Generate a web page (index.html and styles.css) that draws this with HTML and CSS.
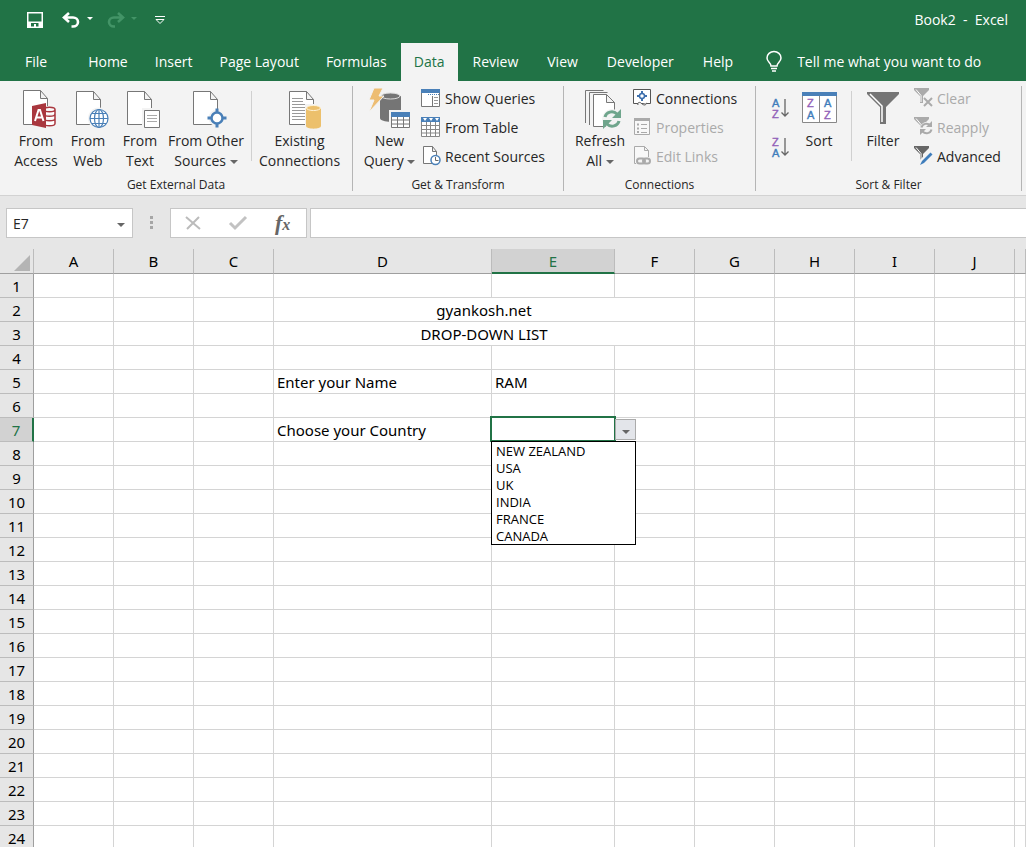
FILE: index.html
```
<!DOCTYPE html>
<html lang="en">
<head>
  <meta charset="UTF-8" />
  <meta name="viewport" content="width=device-width, initial-scale=1.0" />
  <title>Book2 - Excel</title>
  <link rel="stylesheet" href="styles.css">
</head>
<body>
  <header class="titlebar">
    <div class="quick">
      <button class="q-save" aria-label="Save">
        <svg width="16" height="16" viewBox="0 0 16 16"><path d="M0 0h16v16H0z M1.500 1.500v8h13v-8z M4 11v3.500h3V12h2v2.500h2.500V11z" fill="#fff" fill-rule="evenodd"/></svg>
      </button>
      <button class="q-undo" aria-label="Undo">
        <svg width="28" height="16" viewBox="0 0 28 16"><path d="M7 1L2 5.500L7 10 M2.500 5.500H11a5 4.500 0 0 1 0 9H9.500" fill="none" stroke="#fff" stroke-width="2.600"/><path d="M25 5h6l-3 3z" fill="#fff"/></svg>
      </button>
      <button class="q-redo" aria-label="Redo" disabled>
        <svg width="28" height="16" viewBox="0 0 28 16"><path d="M12 1l5 4.500L12 10 M16.500 5.500H8a5 4.500 0 0 0 0 9h1" fill="none" stroke="#439467" stroke-width="2.600"/><path d="M25 5h6l-3 3z" fill="#439467"/></svg>
      </button>
      <button class="q-more" aria-label="Customize Quick Access Toolbar">
        <svg width="10" height="8" viewBox="0 0 10 8"><path d="M0 .5h10 M1 3.500h8L5 7.500z" fill="none" stroke="#fff"/></svg>
      </button>
    </div>
    <div class="doc-name">Book2&nbsp; -&nbsp; Excel</div>
  </header>

  <nav class="tabs">
    <a href="#" class="file">File</a>
    <a href="#">Home</a>
    <a href="#">Insert</a>
    <a href="#">Page Layout</a>
    <a href="#">Formulas</a>
    <a href="#" class="active">Data</a>
    <a href="#">Review</a>
    <a href="#">View</a>
    <a href="#">Developer</a>
    <a href="#">Help</a>
    <button class="tell-me">
      <svg width="16" height="21" viewBox="0 0 16 21"><path d="M5 15c0-3-4-4-4-8a7 6.500 0 0 1 14 0c0 4-4 5-4 8z M5 17.500h6 M6 20h4" fill="none" stroke="#fff" stroke-width="1.500"/></svg>
      Tell me what you want to do
    </button>
  </nav>

  <div class="ribbon">
    <section class="group g-external">
      <div class="tools">
        <button class="big">
          <svg width="40" height="40" viewBox="0 0 40 40">
            <path d="M7.500.5h17l7 8v26h-24z M24.500.5v8h7" fill="#fff" stroke="#777"/>
            <path d="M27 16h14v22H27z" fill="#f3f3f3"/>
            <path d="M28 19.500c0-3 11-3 11 0v14c0 3-11 3-11 0z M28 19.500c0 3 11 3 11 0 M28 24c0 3 11 3 11 0 M28 28.500c0 3 11 3 11 0" fill="#fff" stroke="#a9373e" stroke-width="1.500"/>
            <path d="M16 16l14-3v25l-14-3z" fill="#a9373e"/>
            <path d="M19 31l3.500-11h1.500l3.500 11 M20.500 27.500h5.500" fill="none" stroke="#fff" stroke-width="2"/>
          </svg>
          <span>From<br>Access</span>
        </button>
        <button class="big">
          <svg width="40" height="40" viewBox="0 0 40 40">
            <path d="M8.500 1.500h17l7 8v25h-24z M25.500 1.500v8h7" fill="#fff" stroke="#777"/>
            <circle cx="31" cy="28.500" r="11" fill="#f3f3f3"/>
            <g fill="none" stroke="#4a80b8" stroke-width="1.200"><circle cx="31" cy="28.500" r="9" fill="#fff"/><ellipse cx="31" cy="28.500" rx="4.500" ry="9"/><path d="M31 19.500v18 M22 28.500h18 M24 23.500h14 M24 33.500h14"/></g>
          </svg>
          <span>From<br>Web</span>
        </button>
        <button class="big">
          <svg width="40" height="40" viewBox="0 0 40 40">
            <path d="M7.500 1.500h17l7 8v25h-24z M24.500 1.500v8h7" fill="#fff" stroke="#777"/>
            <path d="M22 18h19v21H22z" fill="#f3f3f3"/>
            <path d="M24.500 20.500h15v17h-15z" fill="#fff" stroke="#777"/>
            <path d="M27 25.500h10 M27 28.500h10 M27 31.500h10" stroke="#aaa"/>
          </svg>
          <span>From<br>Text</span>
        </button>
        <button class="big wide">
          <svg width="40" height="40" viewBox="0 0 40 40">
            <path d="M7.500 1.500h17l7 8v25h-24z M24.500 1.500v8h7" fill="#fff" stroke="#777"/>
            <circle cx="31" cy="28" r="8.500" fill="#f3f3f3"/>
            <circle cx="31" cy="28" r="5.500" fill="#fff" stroke="#4a80b8" stroke-width="2.500"/>
            <path d="M31 18.500v4 M31 33.500v4 M21.500 28h4 M36.500 28h4" stroke="#4a80b8" stroke-width="3"/>
          </svg>
          <span>From Other<br>Sources <i class="caret"></i></span>
        </button>
        <div class="rule"></div>
        <button class="big existing">
          <svg width="40" height="40" viewBox="0 0 40 40">
            <path d="M9.500 1.500h17l7 8v25h-24z M26.500 1.500v8h7" fill="#fff" stroke="#777"/>
            <path d="M12 8.500h11 M12 11.500h11 M12 14.500h18 M12 17.500h18 M12 20.500h18 M12 23.500h18 M12 26.500h18 M12 29.500h18" stroke="#999"/>
            <path d="M25 14h17v25H25z" fill="#f3f3f3"/>
            <path d="M26 18v18c0 3.500 15 3.500 15 0V18z" fill="#ecc06c"/>
            <ellipse cx="33.500" cy="18" rx="7" ry="2.500" fill="#ecc06c" stroke="#fff3d8"/>
          </svg>
          <span>Existing<br>Connections</span>
        </button>
      </div>
      <h2>Get External Data</h2>
    </section>

    <section class="group g-transform">
      <div class="tools">
        <button class="big query">
          <svg width="40" height="40" viewBox="0 0 40 40">
            <path d="M10 6v22c0 5 21 5 21 0V6z" fill="#757575"/>
            <ellipse cx="20.500" cy="6" rx="9.500" ry="3" fill="#757575" stroke="#ddd"/>
            <path d="M4-2h9L9 6h5L-1 22l5-12h-5z" fill="#edbd72" stroke="#f3f3f3"/>
            <path d="M19 20h22v20H19z" fill="#f3f3f3"/>
            <path d="M21.500 22.500h18v15h-18z M21.500 30h18 M21.500 34h18 M27.500 26v12 M33.500 26v12" fill="#fff" stroke="#777"/>
            <path d="M21 22h19v5H21z" fill="#4a80b8"/>
          </svg>
          <span>New<br>Query <i class="caret"></i></span>
        </button>
        <div class="small-list">
          <button>
            <svg width="20" height="20" viewBox="0 0 20 20"><path d="M.5 1.500h18v17H.5z M11.500 8v10" fill="#fff" stroke="#777"/><path d="M0 1h19v4H0z" fill="#4a80b8"/><path d="M7 6.500h11" stroke="#4a80b8" stroke-dasharray="1 1"/><path d="M13 9.500h4 M13 12.500h4 M13 15.500h4" stroke="#999"/></svg>
            Show Queries
          </button>
          <button>
            <svg width="20" height="20" viewBox="0 0 20 20"><path d="M.5 1.500h18v18H.5z M.5 8.500h18 M.5 12.500h18 M.5 16h18 M5.500 5v14 M9.500 5v14 M14.500 5v14" fill="#fff" stroke="#888"/><path d="M0 0h19v5H0z" fill="#4a80b8"/><path d="M2 1h4l-2 3z M8 1h4l-2 3z M14 1h4l-2 3z" fill="#fff"/></svg>
            From Table
          </button>
          <button>
            <svg width="20" height="20" viewBox="0 0 20 20"><path d="M2.500.5h9l4 5v12h-13z M11.500.5v5h4" fill="#fff" stroke="#777"/><circle cx="14.500" cy="14" r="4.500" fill="#fff" stroke="#4a80b8" stroke-width="1.500"/><path d="M14.500 11v3.500h3" fill="none" stroke="#666"/></svg>
            Recent Sources
          </button>
        </div>
      </div>
      <h2>Get &amp; Transform</h2>
    </section>

    <section class="group g-connections">
      <div class="tools">
        <button class="big refresh">
          <svg width="40" height="40" viewBox="0 0 40 40">
            <path d="M5.500 33V.5h18 M9.500 35V2.500h18" fill="none" stroke="#777"/>
            <path d="M13.500 4.500h13l8 8v24h-21z M26.500 4.500v8h8" fill="#fff" stroke="#777"/>
            <circle cx="32" cy="29" r="10" fill="#f3f3f3"/>
            <path d="M25 27c1-5 8-7 12-3 M39 31c-1 5-8 7-12 3" fill="none" stroke="#6fa58c" stroke-width="3"/>
            <path d="M41 19v9h-9z M23 39v-9h9z" fill="#6fa58c"/>
          </svg>
          <span>Refresh<br>All <i class="caret"></i></span>
        </button>
        <div class="small-list">
          <button>
            <svg width="20" height="20" viewBox="0 0 20 20"><path d="M.5 1.500h17v14H.5z" fill="#fff" stroke="#555"/><circle cx="9" cy="8" r="2.500" fill="#fff" stroke="#3f70ad" stroke-width="1.500"/><path d="M9 3v2.500 M9 10.500V13 M4 8h2.500 M11.500 8H14" stroke="#3f70ad" stroke-width="2"/><path d="M5 17c-1-3 2-3 3-2s2 2 4 2c1 0 1-2 2-2" fill="#f3f3f3" stroke="#555"/></svg>
            Connections
          </button>
          <button disabled>
            <svg width="20" height="20" viewBox="0 0 20 20"><path d="M1.500 1.500h15v16h-15z" fill="#f8f8f8" stroke="#aaa"/><path d="M1 1h16v3H1z" fill="#aaa"/><path d="M8 7.500h6 M8 11.500h6 M8 15.500h6" stroke="#aaa"/><path d="M4 6.500h2v2H4z M4 10.500h2v2H4z M4 14h2v2H4z" fill="#aaa"/></svg>
            Properties
          </button>
          <button disabled>
            <svg width="20" height="20" viewBox="0 0 20 20"><path d="M1.500.5h10l4 4v13h-14z M11.500.5v4h4" fill="#f8f8f8" stroke="#aaa"/><path d="M3 11h16v8H3z" fill="#f3f3f3"/><g fill="none" stroke="#aaa" stroke-width="2"><rect x="4" y="12.500" width="8" height="5" rx="2.500"/><rect x="10" y="12.500" width="7" height="5" rx="2.500"/></g></svg>
            Edit Links
          </button>
        </div>
      </div>
      <h2>Connections</h2>
    </section>

    <section class="group g-sort">
      <div class="tools">
        <div class="az">
          <button aria-label="Sort A to Z">
            <svg width="20" height="22" viewBox="0 0 20 22"><text x="1" y="9" fill="#3f7dbb" stroke="#3f7dbb">A</text><text x="1" y="20" fill="#9160b8" stroke="#9160b8">Z</text><path d="M14 1v17 M10.500 14.500L14 18l3.500-3.500" fill="none" stroke="#666" stroke-width="1.300"/></svg>
          </button>
          <button aria-label="Sort Z to A">
            <svg width="20" height="22" viewBox="0 0 20 22"><text x="1" y="9" fill="#9160b8" stroke="#9160b8">Z</text><text x="1" y="20" fill="#3f7dbb" stroke="#3f7dbb">A</text><path d="M14 1v17 M10.500 14.500L14 18l3.500-3.500" fill="none" stroke="#666" stroke-width="1.300"/></svg>
          </button>
        </div>
        <button class="big sort">
          <svg width="40" height="40" viewBox="0 0 40 40">
            <path d="M3.500 2.500h34v30h-34z M20.500 6v26" fill="#fff" stroke="#888"/>
            <path d="M3 2h35v4H3z" fill="#4a80b8"/>
            <text x="8" y="17" fill="#9160b8" stroke="#9160b8">Z</text><text x="8" y="29" fill="#3f7dbb" stroke="#3f7dbb">A</text>
            <text x="25" y="17" fill="#3f7dbb" stroke="#3f7dbb">A</text><text x="25" y="29" fill="#9160b8" stroke="#9160b8">Z</text>
          </svg>
          <span>Sort</span>
        </button>
        <div class="rule"></div>
        <button class="big filter">
          <svg width="40" height="40" viewBox="0 0 40 40"><path d="M4 2h32v2L23 17v17h-6V17L4 4z" fill="#757575"/><path d="M7 4l12 12v16" fill="none" stroke="#fff" stroke-width="1.500"/></svg>
          <span>Filter</span>
        </button>
        <div class="small-list">
          <button disabled>
            <svg width="20" height="20" viewBox="0 0 20 20"><path d="M0 0h15v2L9 8v7H6V8L0 2z" fill="#aaa"/><path d="M2 1.500l5 6V14" fill="none" stroke="#fff"/><path d="M10 10l8 8 M18 10l-8 8" stroke="#aaa" stroke-width="2"/></svg>
            Clear
          </button>
          <button disabled>
            <svg width="20" height="20" viewBox="0 0 20 20"><path d="M0 0h15v2L9 8v7H6V8L0 2z" fill="#aaa"/><path d="M2 1.500l5 6V14" fill="none" stroke="#fff"/><circle cx="12.500" cy="11.500" r="6.500" fill="#f3f3f3"/><path d="M7.500 10.500c1-4 6-5 9-2 M17.500 12.500c-1 4-6 5-9 2" fill="none" stroke="#aaa" stroke-width="2"/><path d="M18 4v6h-6z M6 18v-6h6z" fill="#aaa"/></svg>
            Reapply
          </button>
          <button>
            <svg width="20" height="20" viewBox="0 0 20 20"><path d="M0 0h15v2L9 8v7H6V8L0 2z" fill="#666"/><path d="M2 1.500l5 6V14" fill="none" stroke="#fff"/><path d="M7 16.500L16 7" stroke="#f3f3f3" stroke-width="5"/><path d="M8 15L16.500 6.500l2 2L10 17l-4 2z" fill="#3f7dbb"/></svg>
            Advanced
          </button>
        </div>
      </div>
      <h2>Sort &amp; Filter</h2>
    </section>
  </div>

  <div class="formula-bar">
    <div class="name-box">
      <input type="text" value="E7" aria-label="Name Box">
      <button aria-label="Name list"><i class="caret"></i></button>
    </div>
    <svg class="dots" width="4" height="14" viewBox="0 0 4 14"><path d="M0 0h3v3H0z M0 5h3v3H0z M0 10h3v3H0z" fill="#a6a6a6"/></svg>
    <div class="fx-box">
      <button aria-label="Cancel"><svg width="16" height="14" viewBox="0 0 16 14"><path d="M1 1l14 12 M14 1L2 13" stroke="#bbb" stroke-width="2"/></svg></button>
      <button aria-label="Enter"><svg width="18" height="14" viewBox="0 0 18 14"><path d="M1 7l5 5L17 1" fill="none" stroke="#c2c2c2" stroke-width="3"/></svg></button>
      <button class="fx" aria-label="Insert Function">f<small>x</small></button>
    </div>
    <input class="formula" type="text" aria-label="Formula">
  </div>

  <main class="sheet">
    <table id="grid">
      <colgroup>
        <col class="c-num"><col class="c-std"><col class="c-std"><col class="c-std"><col class="c-d"><col class="c-e">
        <col class="c-std"><col class="c-std"><col class="c-std"><col class="c-std"><col class="c-std"><col>
      </colgroup>
      <thead>
        <tr>
          <th class="corner"><svg width="16" height="16" viewBox="0 0 16 16"><path d="M16 0v16H0z" fill="#b4b4b4"/></svg></th>
          <th>A</th><th>B</th><th>C</th><th>D</th><th class="current">E</th><th>F</th><th>G</th><th>H</th><th>I</th><th>J</th><th></th>
        </tr>
      </thead>
      <tbody></tbody>
    </table>
  </main>

  <template id="picker">
    <div class="selection"></div>
    <button class="open-list" aria-label="Open list"><i class="caret"></i></button>
    <select class="countries" size="6" aria-label="Choose your Country">
      <option>NEW ZEALAND</option>
      <option>USA</option>
      <option>UK</option>
      <option>INDIA</option>
      <option>FRANCE</option>
      <option>CANADA</option>
    </select>
  </template>

  <script>
    const tableBody = document.querySelector('#grid tbody');
    const columns = 'ABCDEFGHIJK'.split('');
    const cells = {
      D2: 'gyankosh.net',
      D3: 'DROP-DOWN LIST',
      D5: 'Enter your Name',
      E5: 'RAM',
      D7: 'Choose your Country'
    };
    // D:F is merged on these rows
    const mergedRows = [2, 3];

    for (let r = 1; r <= 24; r++) {
      const row = document.createElement('tr');
      const head = document.createElement('th');
      head.textContent = r;
      if (r === 7) head.className = 'current';
      row.appendChild(head);

      columns.forEach(col => {
        const merged = mergedRows.includes(r);
        if (merged && (col === 'E' || col === 'F')) return;
        const td = document.createElement('td');
        td.textContent = cells[col + r] || '';
        if (merged && col === 'D') {
          td.colSpan = 3;
          td.className = 'merged';
        }
        if (col + r === 'E7') {
          td.className = 'picked';
          td.appendChild(document.getElementById('picker').content.cloneNode(true));
        }
        row.appendChild(td);
      });
      tableBody.appendChild(row);
    }
  </script>
</body>
</html>
```
FILE: styles.css
```
* { box-sizing: border-box; }
body {
  margin: 0;
  height: 100vh;
  display: flex;
  flex-direction: column;
  overflow: hidden;
  background: #e6e6e6;
  font-family: "Open Sans", "Noto Sans", sans-serif;
  font-size: 14px;
  color: #262626;
}
button, input, select { font: inherit; color: inherit; border: 0; padding: 0; margin: 0; background: none; }
svg { display: block; overflow: visible; flex: none; }
svg text { font-family: "Liberation Sans", sans-serif; font-size: 11px; stroke-width: 0.4; }
.caret {
  display: inline-block;
  border: 4px solid transparent;
  border-top-color: #666;
  border-bottom: 0;
  vertical-align: 2px;
}

/* title bar + tabs */
.titlebar {
  display: flex;
  justify-content: space-between;
  align-items: center;
  height: 43px;
  padding: 0 18px 3px 27px;
  background: #217346;
  color: #fff;
}
.doc-name { padding-bottom: 2px; }
.quick { display: flex; align-items: center; }
.q-undo { margin-left: 19px; }
.q-redo { margin-left: 16px; }
.q-more { margin-left: 21px; }
.tabs { display: flex; gap: 1px; height: 38px; padding-left: 12px; background: #217346; }
.tabs a {
  display: flex;
  align-items: center;
  padding: 0 13px 2px;
  color: #fff;
  text-decoration: none;
  white-space: nowrap;
}
.tabs .file { margin-right: 14px; }
.tabs .active { background: #f3f3f3; color: #217346; }
.tabs .active ~ a { padding: 0 14px 2px; }
.tell-me { display: flex; align-items: center; gap: 15px; margin-left: 18px; padding-bottom: 2px; color: #fff; white-space: nowrap; }

/* ribbon */
.ribbon {
  display: flex;
  padding: 5px 0 4px;
  background: #f3f3f3;
  border-bottom: 1px solid #d2d2d2;
}
.group { border-right: 1px solid #b5b5b5; flex: none; }
.group h2 { margin: 0; font-size: 12px; font-weight: 400; line-height: 12px; text-align: center; }
.tools { display: flex; height: 93px; }
.g-external { width: 353px; }
.g-external .tools { padding-left: 10px; }
.g-transform { width: 211px; }
.g-connections { width: 192px; }
.g-sort { width: 266px; }
.big {
  display: flex;
  flex-direction: column;
  align-items: center;
  width: 52px;
  padding-top: 4px;
  line-height: 20px;
  white-space: nowrap;
}
.big span { margin-top: 1px; }
.big.wide { width: 80px; }
.big.existing { width: 95px; }
.big.query { width: 68px; padding-left: 5px; }
.big.refresh { width: 69px; padding-left: 3px; }
.big.sort { width: 56px; }
.big.filter { width: 62px; }
.rule { width: 1px; height: 70px; margin: 5px 0 0 5px; background: #d0d0d0; }
.g-sort .rule { margin-left: 4px; }
.small-list { display: flex; flex-direction: column; gap: 3px; }
.small-list button { display: flex; align-items: center; gap: 4px; height: 26px; padding-bottom: 2px; white-space: nowrap; }
.g-connections .small-list button { gap: 3px; }
.g-sort .small-list button { gap: 3px; }
.small-list button:disabled { color: #aaa; }
.az { display: flex; flex-direction: column; gap: 17px; width: 35px; padding: 12px 0 0 15px; }

/* formula bar */
.formula-bar { display: flex; align-items: center; padding: 12px 0 11px 6px; }
.name-box, .fx-box, .formula { height: 30px; background: #fff; border: 1px solid #c6c6c6; }
.name-box { display: flex; width: 127px; }
.name-box input { flex: 1; min-width: 0; padding-left: 6px; }
.name-box button { width: 23px; }
.dots { margin: 0 16px 0 17px; }
.fx-box { display: flex; width: 137px; padding-right: 1px; }
.fx-box button { flex: 1; display: flex; align-items: center; justify-content: center; }
.fx-box .fx { font: italic bold 22px/24px "Liberation Serif", serif; color: #666; }
.fx small { font-size: 16px; margin-top: 4px; }
.formula { flex: 1; margin-left: 3px; border-right: 0; }

/* sheet */
.sheet { flex: 1; min-height: 0; overflow: hidden; }
table { width: 100%; table-layout: fixed; border-collapse: separate; border-spacing: 0; font-family: "Noto Sans", "Open Sans", sans-serif; font-size: 15px; color: #000; }
.c-num { width: 34px; }
.c-std { width: 80px; }
.c-d { width: 218px; }
.c-e { width: 123px; }
th, td { height: 24px; padding: 0; line-height: 22px; font-weight: 400; white-space: nowrap; }
th { background: #e6e6e6; border-right: 1px solid #9f9f9f; border-bottom: 1px solid #bcbcbc; }
td { padding: 0 3px; background: #fff; border-right: 1px solid #d4d4d4; border-bottom: 1px solid #d4d4d4; }
thead th { height: 25px; border-right-color: #bcbcbc; border-bottom-color: #9f9f9f; }
thead .current { padding-top: 1px; background: #d2d2d2; color: #217346; border-bottom: 2px solid #217346; }
tbody .current { background: #d2d2d2; color: #217346; border-right: 2px solid #217346; }
.corner svg { margin: 3px 3px 0 auto; }
.merged { text-align: center; }

.picked { position: relative; }
.selection { position: absolute; inset: -2px -2px -1px; border: 2px solid #217346; }
.open-list {
  position: absolute;
  left: calc(100% + 1px);
  top: 1px;
  width: 21px;
  height: 21px;
  background: #e3e5ea;
  border: 1px solid #ababab;
  line-height: 16px;
}
.countries {
  position: absolute;
  z-index: 1;
  left: -1px;
  top: 23px;
  width: 145px;
  height: 104px;
  appearance: none;
  overflow: hidden;
  background: #fff;
  border: 1px solid #000;
  border-radius: 0;
  font-family: "Open Sans", "Noto Sans", sans-serif;
  font-size: 13px;
}
.countries option { height: 17px; min-height: 17px; padding: 0 4px; line-height: 17px; }
```
